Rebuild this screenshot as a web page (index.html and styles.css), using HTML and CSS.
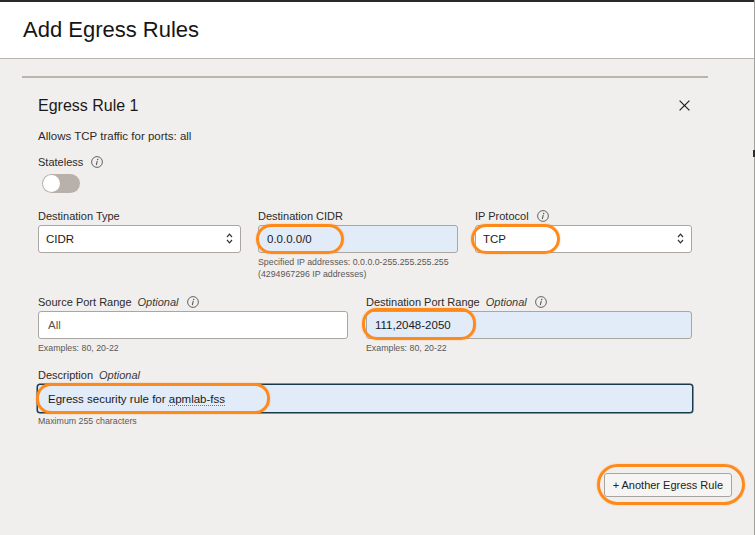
FILE: index.html
```html
<!DOCTYPE html>
<html lang="en">
<head>
<meta charset="utf-8">
<title>Add Egress Rules</title>
<link rel="stylesheet" href="styles.css">
</head>
<body>
<div class="page">
  <div class="topbar"></div>
  <header class="head"><h1>Add Egress Rules</h1></header>
  <main class="main">
    <div class="rule-line"></div>
    <section class="rule">
      <div class="rule-head">
        <h2>Egress Rule 1</h2>
        <button class="close" aria-label="Close">
          <svg viewBox="0 0 11 11" width="11" height="11"><path d="M0.6 0.6 L10.4 10.4 M10.4 0.6 L0.6 10.4" stroke="#1e1e1e" stroke-width="1.2" fill="none"/></svg>
        </button>
      </div>
      <p class="summary">Allows TCP traffic for ports: all</p>

      <div class="label stateless-label">Stateless
        <svg class="info" viewBox="0 0 12 12" width="12" height="12"><circle cx="6" cy="6" r="5.4" fill="none" stroke="#555" stroke-width="0.9"/><circle cx="6.7" cy="3.5" r="0.75" fill="#555"/><path d="M6.2 5.2 L5.4 8.7" stroke="#555" stroke-width="1.05" stroke-linecap="round"/></svg>
      </div>
      <div class="toggle"><span class="knob"></span></div>

      <div class="grid3">
        <div class="field">
          <div class="label">Destination Type</div>
          <div class="control">
            <div class="input select"><span>CIDR</span>
              <svg class="chev" viewBox="0 0 7 13" width="7" height="13"><path d="M1 5 L3.5 2.2 L6 5 M1 8 L3.5 10.8 L6 8" stroke="#333" stroke-width="1.2" fill="none"/></svg>
            </div>
          </div>
        </div>
        <div class="field">
          <div class="label">Destination CIDR</div>
          <div class="control">
            <div class="input filled"><span>0.0.0.0/0</span></div>
            <span class="mark mark-cidr"></span>
          </div>
          <div class="help">Specified IP addresses: 0.0.0.0-255.255.255.255<br>(4294967296 IP addresses)</div>
        </div>
        <div class="field">
          <div class="label">IP Protocol
            <svg class="info" viewBox="0 0 12 12" width="12" height="12"><circle cx="6" cy="6" r="5.4" fill="none" stroke="#555" stroke-width="0.9"/><circle cx="6.7" cy="3.5" r="0.75" fill="#555"/><path d="M6.2 5.2 L5.4 8.7" stroke="#555" stroke-width="1.05" stroke-linecap="round"/></svg>
          </div>
          <div class="control">
            <div class="input select"><span>TCP</span>
              <svg class="chev" viewBox="0 0 7 13" width="7" height="13"><path d="M1 5 L3.5 2.2 L6 5 M1 8 L3.5 10.8 L6 8" stroke="#333" stroke-width="1.2" fill="none"/></svg>
            </div>
            <span class="mark mark-tcp"></span>
          </div>
        </div>
      </div>

      <div class="grid2">
        <div class="field">
          <div class="label">Source Port Range <em>Optional</em>
            <svg class="info" viewBox="0 0 12 12" width="12" height="12"><circle cx="6" cy="6" r="5.4" fill="none" stroke="#555" stroke-width="0.9"/><circle cx="6.7" cy="3.5" r="0.75" fill="#555"/><path d="M6.2 5.2 L5.4 8.7" stroke="#555" stroke-width="1.05" stroke-linecap="round"/></svg>
          </div>
          <div class="control">
            <div class="input wide"><span class="placeholder">All</span></div>
          </div>
          <div class="help">Examples: 80, 20-22</div>
        </div>
        <div class="field">
          <div class="label">Destination Port Range <em>Optional</em>
            <svg class="info" viewBox="0 0 12 12" width="12" height="12"><circle cx="6" cy="6" r="5.4" fill="none" stroke="#555" stroke-width="0.9"/><circle cx="6.7" cy="3.5" r="0.75" fill="#555"/><path d="M6.2 5.2 L5.4 8.7" stroke="#555" stroke-width="1.05" stroke-linecap="round"/></svg>
          </div>
          <div class="control">
            <div class="input filled"><span>111,2048-2050</span></div>
            <span class="mark mark-port"></span>
          </div>
          <div class="help">Examples: 80, 20-22</div>
        </div>
      </div>

      <div class="field desc-field">
        <div class="label">Description <em>Optional</em></div>
        <div class="control desc-control">
          <div class="input filled focused"><span>Egress security rule for <span class="spell">apmlab-fss</span></span></div>
          <span class="mark mark-desc"></span>
        </div>
        <div class="help">Maximum 255 characters</div>
      </div>
    </section>

    <div class="actions">
      <div class="control">
        <button class="btn">+ Another Egress Rule</button>
        <span class="mark mark-btn"></span>
      </div>
    </div>
  </main>
</div>
</body>
</html>
```

FILE: styles.css
```css
* { box-sizing: border-box; }

html, body {
  margin: 0;
  padding: 0;
  background: #f1efed;
}

body {
  font-family: "Liberation Sans", Arial, sans-serif;
  color: #1f1e1c;
}

.page {
  width: 755px;
  min-height: 535px;
  border-right: 1px solid #a3a19e;
  position: relative;
}

.page::after {
  content: "";
  position: absolute;
  right: -1px;
  top: 150px;
  width: 2px;
  height: 7px;
  background: #2e2d2b;
}

.topbar {
  height: 2px;
  background: #2b2a28;
}

.head {
  height: 57px;
  background: #fff;
  border-bottom: 1px solid #b9b6b2;
  padding: 15px 0 0 23px;
}

.head h1 {
  margin: 0;
  font-size: 22px;
  line-height: 26px;
  font-weight: 400;
  color: #161513;
}

.main {
  padding-top: 17px;
}

.rule-line {
  margin-left: 22px;
  width: 686px;
  height: 2px;
  background: #b9b4ae;
}

.rule {
  margin: 17.5px 0 0 38px;
  width: 654px;
}

.rule-head {
  display: flex;
  justify-content: space-between;
  align-items: center;
  height: 20px;
}

.rule-head h2 {
  margin: 0;
  font-size: 16px;
  line-height: 20px;
  font-weight: 400;
  color: #1a1918;
}

.close {
  width: 11px;
  height: 11px;
  padding: 0;
  margin: -1px 2px 0 0;
  border: 0;
  background: none;
  display: flex;
}

.summary {
  margin: 13.5px 0 0;
  font-size: 11.5px;
  line-height: 14px;
  color: #2b2a28;
}

.label {
  display: flex;
  align-items: center;
  gap: 6px;
  font-size: 11px;
  line-height: 14px;
  color: #2b2a28;
  margin-bottom: 2px;
  white-space: nowrap;
}

.label em {
  font-style: italic;
  color: #3a3937;
}

.label .info {
  margin-left: 2px;
  flex: none;
}

.stateless-label {
  margin-top: 12px;
  margin-bottom: 0;
}

.toggle {
  margin: 5px 0 0 4px;
  width: 38px;
  height: 19px;
  border-radius: 10px;
  background: #b8b1ab;
  padding: 1px;
  display: flex;
}

.knob {
  width: 17px;
  height: 17px;
  border-radius: 50%;
  background: #fff;
}

.grid3 {
  display: grid;
  grid-template-columns: 203px 200px 217px;
  column-gap: 17px;
  margin-top: 15.5px;
}

.grid2 {
  display: grid;
  grid-template-columns: 310px 326px;
  column-gap: 18px;
  margin-top: 15.5px;
}

.control {
  position: relative;
}

.input {
  height: 28px;
  border: 1px solid #aaa7a3;
  border-radius: 3px;
  background: #fff;
  display: flex;
  align-items: center;
  justify-content: space-between;
  padding: 0 7px 0 7px;
  font-size: 11.5px;
  color: #1a1a1a;
}

.input.filled {
  background: #e2ebf8;
  padding-left: 8px;
}

.input.wide {
  padding-left: 9px;
}

.placeholder {
  color: #555;
}

.chev {
  flex: none;
}

.help {
  margin-top: 3px;
  font-size: 8.8px;
  line-height: 12px;
  color: #5a5856;
}

.desc-field {
  margin-top: 14px;
}

.desc-control {
  margin-left: -1px;
  width: 656px;
}

.input.focused {
  height: 29px;
  border: 1px solid #17394a;
  box-shadow: 0 0 0 0.5px #17394a;
  padding-left: 10px;
}

.desc-field .help {
  margin-top: 2px;
}

.spell {
  text-decoration: underline dotted #e0454a;
  text-decoration-thickness: 1px;
  text-underline-offset: 2px;
}

.actions {
  display: flex;
  justify-content: flex-end;
  padding-right: 22px;
  margin-top: 46px;
}

.btn {
  height: 24px;
  padding: 0 8px;
  font-family: "Liberation Sans", Arial, sans-serif;
  font-size: 11px;
  color: #222;
  background: #f6f5f3;
  border: 1px solid #a8a5a1;
  border-radius: 3px;
  display: block;
}

.mark {
  position: absolute;
  border: 3px solid #ff8a1c;
  border-radius: 15px;
  pointer-events: none;
  box-shadow: 0 0 1.5px rgba(255, 140, 30, 0.7);
}

.mark-cidr { left: -2px; top: -1px; width: 88px; height: 30px; }
.mark-tcp { left: -4px; top: -1px; width: 89px; height: 30px; }
.mark-port { left: -4px; top: -3px; width: 114px; height: 32px; }
.mark-desc { left: -1px; top: -1px; width: 234px; height: 31px; }
.mark-btn { left: -7px; top: -9px; width: 148px; height: 41px; border-radius: 21px; }
```
